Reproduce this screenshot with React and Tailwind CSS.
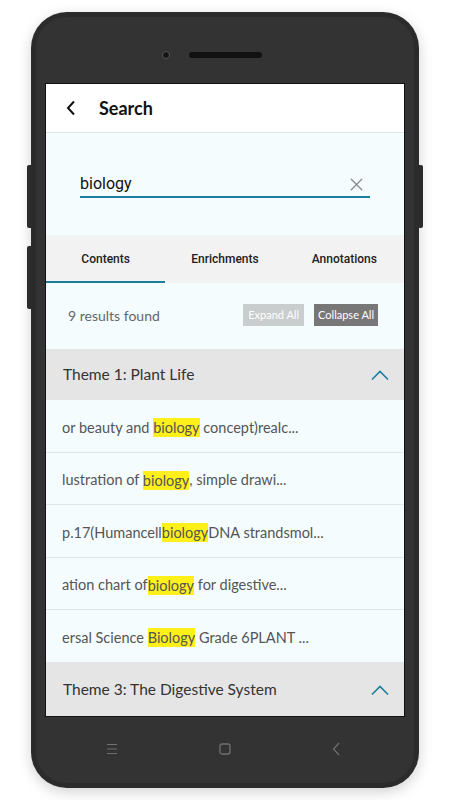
import { X } from 'lucide-react';

const results = [
  ['or beauty and ', 'biology', ' concept)realc...'],
  ['lustration of ', 'biology', ', simple drawi...'],
  ['p.17(Humancell', 'biology', 'DNA strandsmol...'],
  ['ation chart of', 'biology', ' for digestive...'],
  ['ersal Science ', 'Biology', ' Grade 6PLANT ...'],
];

function ChevronUp() {
  return (
    <svg width="20" height="12" viewBox="0 0 20 12" fill="none">
      <path d="M2 10.5 L10 2.5 L18 10.5" stroke="#1b7e9c" strokeWidth="1.6" />
    </svg>
  );
}

function ThemeHeader({ title, height }) {
  return (
    <div className={`flex items-center justify-between bg-[#e5e5e5] pl-[17px] pr-[14px] pt-[1px] shrink-0 ${height}`}>
      <span className="text-[15.5px] text-[#333] font-['Lato',sans-serif]">{title}</span>
      <ChevronUp />
    </div>
  );
}

export default function App() {
  return (
    <div className="w-[450px] h-[800px] bg-white flex justify-center pt-[12px]">
      <div className="relative w-[388px] h-[776px] rounded-[36px] bg-[#2b2b2b] p-[5px] shadow-[0_4px_14px_rgba(0,0,0,0.18)]">
        {/* side buttons */}
        <div className="absolute left-[-4px] top-[153px] w-[5px] h-[63px] rounded-l-[2px] bg-[#2b2b2b]" />
        <div className="absolute left-[-4px] top-[234px] w-[5px] h-[63px] rounded-l-[2px] bg-[#2b2b2b]" />
        <div className="absolute right-[-4px] top-[153px] w-[5px] h-[63px] rounded-r-[2px] bg-[#2b2b2b]" />

        <div className="h-full rounded-[31px] bg-[#333] flex flex-col items-stretch">
          {/* top bezel */}
          <div className="h-[66px] flex items-center justify-center gap-[19px] pt-[10px] shrink-0">
            <div className="w-[8px] h-[8px] rounded-full bg-[#151515] border-[1.5px] border-[#555]" />
            <div className="w-[73px] h-[6px] rounded-full bg-[#111]" />
            <div className="w-[8px] h-[8px]" />
          </div>

          {/* screen */}
          <div className="mx-[9px] h-[634px] border border-[#111] bg-[#f4fcfe] flex flex-col overflow-hidden shrink-0">
            <div className="h-[49px] bg-white border-b border-[#dde2e5] flex items-center pl-[20px] shrink-0">
              <svg width="10" height="16" viewBox="0 0 10 16" fill="none">
                <path d="M8 1.5 L2 8 L8 14.5" stroke="#111" strokeWidth="2" />
              </svg>
              <span className="ml-[23px] text-[18px] font-bold text-[#111] font-['Lato',sans-serif]">Search</span>
            </div>

            <div className="h-[102px] flex items-center px-[34px] shrink-0">
              <div className="flex-1 flex items-center border-b-2 border-[#1b7e9c] h-[28px] pt-[2px]">
                <span className="flex-1 text-[16px] text-[#111] font-['Roboto',sans-serif]">biology</span>
                <X size={21} strokeWidth={1.5} className="text-[#888] mr-[3px]" />
              </div>
            </div>

            <div className="h-[48px] bg-[#f2f2f2] grid grid-cols-3 shrink-0 font-['Roboto',sans-serif] text-[12px] font-medium text-[#222]">
              <div className="flex items-center justify-center border-b-2 border-[#1b7e9c] pt-[2px]">Contents</div>
              <div className="flex items-center justify-center">Enrichments</div>
              <div className="flex items-center justify-center">Annotations</div>
            </div>

            <div className="h-[66px] flex items-center pl-[22px] pr-[26px] pb-[2px] shrink-0 font-['Lato',sans-serif]">
              <span className="flex-1 text-[14px] text-[#666]">9 results found</span>
              <div className="h-[22px] px-[5px] bg-[#c9cdcd] text-white text-[11px] flex items-center">Expand All</div>
              <div className="ml-[10px] h-[22px] px-[4px] bg-[#777] text-white text-[11px] flex items-center">Collapse All</div>
            </div>

            <ThemeHeader title="Theme 1: Plant Life" height="h-[51px]" />

            {results.map(([a, b, c], i) => (
              <div key={i} className="h-[52.5px] shrink-0 flex items-center pl-[16px] pt-[4px] border-b border-[#e0e6ea] text-[14.5px] text-[#555] font-['Lato',sans-serif] whitespace-pre">
                <span>{a}</span>
                <span className="bg-[#fff01a] leading-[19px]">{b}</span>
                <span>{c}</span>
              </div>
            ))}

            <ThemeHeader title="Theme 3: The Digestive System" height="h-[54px]" />
          </div>

          {/* bottom nav */}
          <div className="flex-1 flex items-center justify-between pl-[70px] pr-[74px] pb-[2px]">
            <svg width="12" height="12" viewBox="0 0 12 12" fill="none">
              <path d="M1 1.5 H11 M1 6 H11 M1 10.5 H11" stroke="#707070" strokeWidth="1.2" />
            </svg>
            <svg width="12" height="12" viewBox="0 0 12 12" fill="none">
              <rect x="1" y="1" width="10" height="10" rx="2" stroke="#707070" strokeWidth="1.3" />
            </svg>
            <svg width="8" height="14" viewBox="0 0 8 14" fill="none">
              <path d="M7 1 L1.5 7 L7 13" stroke="#707070" strokeWidth="1.2" />
            </svg>
          </div>
        </div>
      </div>
    </div>
  );
}
